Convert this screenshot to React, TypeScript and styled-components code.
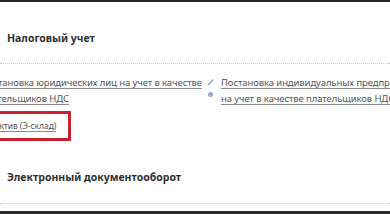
import styled, { createGlobalStyle } from 'styled-components';

const Global = createGlobalStyle`
    html, body {
        margin: 0;
        padding: 0;
        background: #fff;
        overflow: hidden;
    }
    body {
        font-family: "Noto Sans", "Open Sans", sans-serif;
    }
`

const Page = styled.div`
    width: 390px;
    height: 214px;
    display: flex;
    flex-direction: column;
    overflow: hidden;
    background: #fff;
`

const Bar = styled.div<{ $h: number }>`
    height: ${p => p.$h}px;
    background: #2a2a2a;
    flex-shrink: 0;
`

const Section = styled.section`
    display: flex;
    flex-direction: column;
`

const Heading = styled.h3<{ $top: number; $bottom: number }>`
    margin: 0;
    padding: ${p => p.$top}px 0 ${p => p.$bottom}px 7px;
    font-size: 10.5px;
    line-height: 18px;
    font-weight: 700;
    color: #2f2f2f;
    border-bottom: 1px dotted #c8c8c8;
`

const Links = styled.div`
    display: grid;
    grid-template-columns: 226px 1fr;
    margin-left: -19px;
    padding-top: 11px;
    row-gap: 4px;
`

const Item = styled.div`
    display: flex;
    gap: 7px;
    white-space: nowrap;
`

const Icons = styled.div`
    display: flex;
    flex-direction: column;
    align-items: center;
    gap: 6px;
    padding-top: 4px;
    width: 7px;
`

const Dot = styled.span`
    width: 5px;
    height: 5px;
    border-radius: 50%;
    background: #9aa6c8;
`

const Link = styled.a<{ $size?: number }>`
    font-size: ${p => p.$size ?? 9.5}px;
    letter-spacing: -0.1px;
    line-height: 16px;
    color: #555;
    text-decoration: underline;
    text-decoration-color: #8a8a8a;
    text-underline-offset: 2px;
`

const Highlight = styled.div`
    grid-column: 1;
    justify-self: start;
    margin-left: -12px;
    border: 3px solid #c8202f;
    padding: 4px 12px 4px 22px;
    line-height: 16px;
    font-size: 9px;
    white-space: nowrap;
`

const App = () => {
    return (
        <Page>
            <Global />
            <Bar $h={2} />
            <Section>
                <Heading $top={27} $bottom={16}>Налоговый учет</Heading>
                <Links>
                    <Item>
                        <Link href="#">Постановка юридических лиц на учет в качестве<br />плательщиков НДС</Link>
                    </Item>
                    <Item>
                        <Icons>
                            <svg width="7" height="7" viewBox="0 0 7 7">
                                <path d="M1.2 5.8 L5.8 1.2" stroke="#a8b2c8" strokeWidth="1.8" strokeLinecap="round" />
                            </svg>
                            <Dot />
                        </Icons>
                        <Link href="#">Постановка индивидуальных предпринимателей<br />на учет в качестве плательщиков НДС</Link>
                    </Item>
                    <Highlight>
                        <Link href="#" $size={8.6}>Актив (Э-склад)</Link>
                    </Highlight>
                </Links>
            </Section>
            <Section>
                <Heading $top={27} $bottom={17}>Электронный документооборот</Heading>
            </Section>
            <div style={{ flex: 1 }} />
            <Bar $h={3} />
        </Page>
    )
}

export default App
